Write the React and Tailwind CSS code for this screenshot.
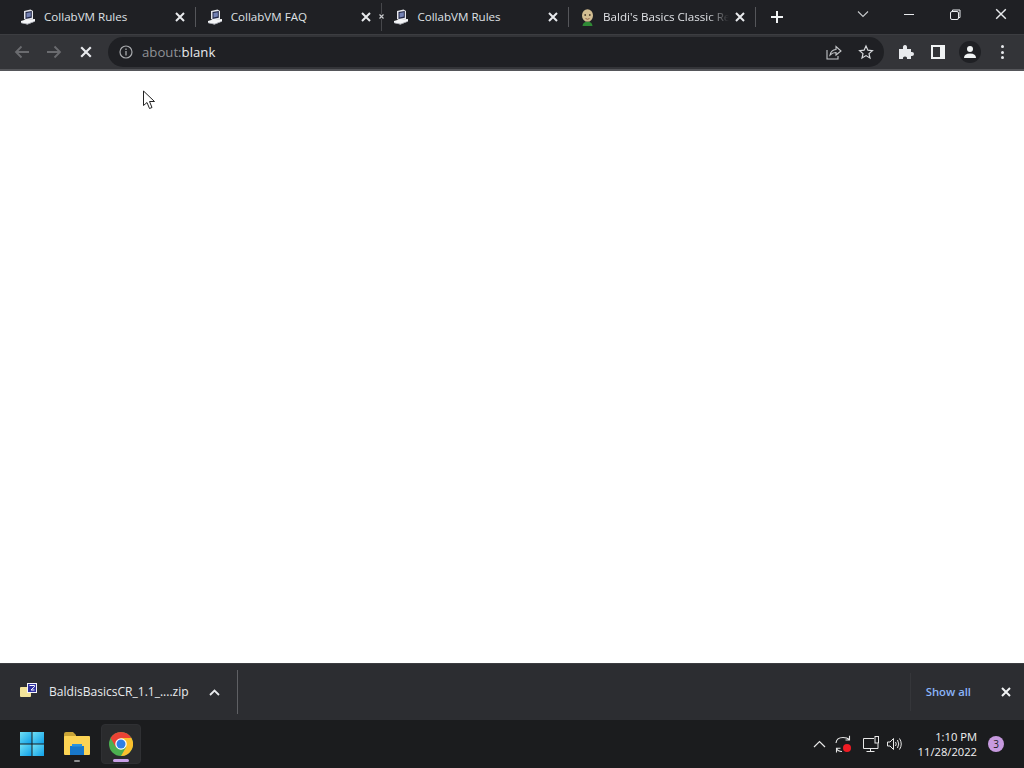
import React from "react";

const font = { fontFamily: "'Open Sans', 'Noto Sans', sans-serif" };

function VmIcon() {
  return (
    <svg width="16" height="16" viewBox="0 0 16 16" className="shrink-0">
      <path d="M4 2 L10.5 0.5 L13 2 L13 10 L6.5 11.5 L4 10 Z" fill="#e6e7ec" />
      <path d="M5.5 3 L11.8 2 L11.8 8.8 L5.5 10 Z" fill="#232846" />
      <path d="M6.5 4 L10.8 3.2 L10.8 7.6 L6.5 8.4 Z" fill="#7482b4" />
      <path d="M1 12 L6 10.5 L15 10 L15 12.5 L7.5 15.5 L1 14 Z" fill="#f4f5f7" />
      <path d="M1 13.4 L7.5 14.8 L15 12 L15 12.6 L7.5 15.5 L1 14 Z" fill="#8d909a" />
    </svg>
  );
}

function BaldiIcon() {
  return (
    <svg width="15" height="17" viewBox="0 0 15 17" className="shrink-0">
      <ellipse cx="7.5" cy="6.5" rx="5.5" ry="6.3" fill="#d2bd92" />
      <circle cx="5.2" cy="6" r="0.9" fill="#4a4030" />
      <circle cx="9.8" cy="6" r="0.9" fill="#4a4030" />
      <path d="M5.5 9.5 Q7.5 11 9.5 9.5" stroke="#8a5a44" strokeWidth="0.9" fill="none" />
      <path d="M2.5 17 Q3 12.8 7.5 12.8 Q12 12.8 12.5 17 Z" fill="#2f8a35" />
    </svg>
  );
}

function X({ size = 10, w = 2, color = "#e8eaed" }) {
  return (
    <svg width={size} height={size} viewBox="0 0 10 10" className="shrink-0">
      <path d="M1 1 L9 9 M9 1 L1 9" stroke={color} strokeWidth={w} fill="none" />
    </svg>
  );
}

function Tab({ icon, title, fade, tiny }) {
  return (
    <div className="relative flex h-[34px] w-[186.7px] shrink-0 items-center pl-[11px]">
      {icon}
      <span
        className={`ml-[8px] min-w-0 flex-1 overflow-hidden whitespace-nowrap text-[11.6px] text-[#dfe1e5] ${fade ? "[mask-image:linear-gradient(to_right,black_83%,transparent_100%)]" : ""}`}
      >
        {title}
      </span>
      <span className="ml-[6px] mr-[10px]">
        <X />
      </span>
      <div className={`w-px shrink-0 ${tiny ? "h-[28px] bg-[#46474b]" : "h-[20px] bg-[#55565a]"}`} />
      {tiny && (
        <span className="absolute right-[-2px] top-[14px] bg-[#1f2024]">
          <X size={5} w={2.4} color="#c8cacd" />
        </span>
      )}
    </div>
  );
}

function Windows() {
  return (
    <svg width="24" height="24" viewBox="0 0 24 24" className="shrink-0">
      <defs>
        <linearGradient id="win" x1="0" y1="0" x2="1" y2="1">
          <stop offset="0" stopColor="#6fe0f5" />
          <stop offset="1" stopColor="#0f9fe8" />
        </linearGradient>
      </defs>
      <rect x="0" y="0" width="11.5" height="11.5" fill="url(#win)" />
      <rect x="12.5" y="0" width="11.5" height="11.5" fill="url(#win)" />
      <rect x="0" y="12.5" width="11.5" height="11.5" fill="url(#win)" />
      <rect x="12.5" y="12.5" width="11.5" height="11.5" fill="url(#win)" />
    </svg>
  );
}

function Folder() {
  return (
    <svg width="26" height="24" viewBox="0 0 26 24" className="shrink-0">
      <path d="M0 2 Q0 0 2 0 L9 0 L12 3 L12 6 L0 6 Z" fill="#c9a437" />
      <rect x="0" y="4" width="26" height="19" rx="1" fill="#fcd354" />
      <rect x="6" y="14" width="14" height="9" fill="#1877c9" />
      <rect x="8" y="12" width="10" height="2.5" fill="#2a93de" />
    </svg>
  );
}

function Chrome() {
  return (
    <svg width="24" height="24" viewBox="0 0 48 48" className="shrink-0">
      <circle cx="24" cy="24" r="24" fill="#4caf50" />
      <path d="M24 0 A24 24 0 0 1 44.8 12 L24 12 L24 12 L13.6 30 L3.2 12 A24 24 0 0 1 24 0 Z" fill="#ea4335" />
      <path d="M44.8 12 A24 24 0 0 1 24 48 L34.4 30 L24 12 Z" fill="#fbc02d" />
      <circle cx="24" cy="24" r="11.5" fill="#fff" />
      <circle cx="24" cy="24" r="9" fill="#2f7fe6" />
    </svg>
  );
}

export default function App() {
  return (
    <div className="flex h-[768px] w-[1024px] flex-col overflow-hidden bg-white" style={font}>
      {/* tab strip */}
      <div className="flex h-[34px] shrink-0 items-center bg-[#1f2024] pl-[9px]">
        <Tab icon={<VmIcon />} title="CollabVM Rules" />
        <Tab icon={<VmIcon />} title="CollabVM FAQ" tiny />
        <Tab icon={<VmIcon />} title="CollabVM Rules" />
        <Tab icon={<BaldiIcon />} title="Baldi's Basics Classic Remastered" fade />
        <svg width="14" height="14" viewBox="0 0 14 14" className="ml-[14px] shrink-0">
          <path d="M7 1 V13 M1 7 H13" stroke="#f1f3f4" strokeWidth="2" />
        </svg>
        <svg width="12" height="8" viewBox="0 0 12 8" className="mb-[6px] ml-[73px] shrink-0">
          <path d="M1 1.5 L6 6.5 L11 1.5" stroke="#c8cacd" strokeWidth="1.1" fill="none" />
        </svg>
        <div className="mb-[6px] ml-[35px] h-px w-[10px] shrink-0 bg-[#e8eaed]" />
        <svg width="11" height="11" viewBox="0 0 11 11" className="mb-[6px] ml-[36px] shrink-0">
          <path d="M2.5 2.5 V1 H10 V8.5 H8.5" stroke="#e8eaed" fill="none" />
          <rect x="0.5" y="2.5" width="8" height="8" rx="1.5" stroke="#e8eaed" fill="none" />
        </svg>
        <span className="mb-[6px] ml-[34px]">
          <X size={12} w={1.2} />
        </span>
      </div>

      {/* toolbar */}
      <div className="flex h-[37px] shrink-0 items-center border-t border-[#3c3d41] border-b-2 border-b-[#55565a] bg-[#333438]">
        <svg width="16" height="14" viewBox="0 0 16 14" className="ml-[14px] shrink-0">
          <path d="M15 7 H2 M7.5 1.5 L2 7 L7.5 12.5" stroke="#6a6b6f" strokeWidth="1.8" fill="none" />
        </svg>
        <svg width="16" height="14" viewBox="0 0 16 14" className="ml-[16px] shrink-0">
          <path d="M1 7 H14 M8.5 1.5 L14 7 L8.5 12.5" stroke="#6a6b6f" strokeWidth="1.8" fill="none" />
        </svg>
        <span className="ml-[18px]">
          <X size={12} w={1.8} />
        </span>
        <div className="ml-[16px] flex h-[30px] w-[776px] shrink-0 items-center rounded-full bg-[#1f2024] pl-[11px] pr-[10px]">
          <svg width="14" height="14" viewBox="0 0 14 14" className="shrink-0">
            <circle cx="7" cy="7" r="6" stroke="#a8aaad" strokeWidth="1.2" fill="none" />
            <path d="M7 6 V10.5 M7 3.5 V5" stroke="#a8aaad" strokeWidth="1.3" />
          </svg>
          <span className="ml-[9px] pt-[1px] text-[13.2px] text-[#8f9195]">
            about:<span className="text-[#e8eaed]">blank</span>
          </span>
          <div className="flex-1" />
          <svg width="16" height="15" viewBox="0 0 16 15" className="shrink-0">
            <path d="M1 5 V14 H12 V11" stroke="#c4c6c9" strokeWidth="1.1" fill="none" />
            <path d="M4 10 Q5 5 10 4.5 V1.5 L15 6 L10 10 V7.5 Q6.5 7.5 4 10 Z" stroke="#c4c6c9" strokeWidth="1.1" fill="none" />
          </svg>
          <svg width="16" height="16" viewBox="0 0 16 16" className="ml-[16px] shrink-0">
            <path d="M8 2 L9.9 6.2 L14.4 6.6 L11 9.6 L12 14 L8 11.6 L4 14 L5 9.6 L1.6 6.6 L6.1 6.2 Z" stroke="#d8dadd" strokeWidth="1.2" fill="none" />
          </svg>
        </div>
        <svg width="16" height="16" viewBox="0 0 16 16" className="ml-[14px] shrink-0">
          <path d="M1 5 H5 Q4.5 1 7 1 Q9.5 1 9 5 H13 V8 Q16 7.5 16 10 Q16 12.5 13 12 V15 H9 Q9.5 12.5 7 12.5 Q4.5 12.5 5 15 H1 Z" fill="#e8eaed" />
        </svg>
        <svg width="14" height="14" viewBox="0 0 14 14" className="ml-[17px] shrink-0">
          <path d="M0 0 H14 V14 H0 Z M2 2 V12 H9 V2 Z" fill="#f1f3f4" fillRule="evenodd" />
        </svg>
        <div className="ml-[14px] flex h-[22px] w-[22px] shrink-0 items-center justify-center rounded-full bg-[#1f2024]">
          <svg width="14" height="14" viewBox="0 0 14 14">
            <circle cx="7" cy="4" r="3" fill="#f1f3f4" />
            <path d="M1 13 Q1 8.5 7 8.5 Q13 8.5 13 13 Z" fill="#f1f3f4" />
          </svg>
        </div>
        <div className="ml-[20px] flex shrink-0 flex-col gap-[2.5px]">
          <div className="h-[3px] w-[3px] rounded-full bg-[#e8eaed]" />
          <div className="h-[3px] w-[3px] rounded-full bg-[#e8eaed]" />
          <div className="h-[3px] w-[3px] rounded-full bg-[#e8eaed]" />
        </div>
      </div>

      {/* page */}
      <div className="relative flex-1 bg-white">
        <svg width="14" height="20" viewBox="0 0 14 20" className="absolute left-[142px] top-[19px]">
          <path d="M1.5 1 V15.5 L5 12.5 L7.5 18.5 L10 17.5 L7.5 11.5 L12.5 11.5 Z" fill="#fff" stroke="#222" strokeWidth="1" />
        </svg>
      </div>

      {/* download bar */}
      <div className="flex h-[57px] shrink-0 items-center border-t border-[#3c3d41] bg-[#2c2d31]">
        <svg width="17" height="16" viewBox="0 0 17 16" className="mb-[3px] ml-[20px] shrink-0">
          <rect x="0" y="4" width="11" height="10" rx="1" fill="#f3e39a" />
          <rect x="7" y="0" width="10" height="10" fill="#f5f5fa" />
          <rect x="8" y="1" width="8" height="8" fill="#2e2f9e" />
          <path d="M9.5 2.5 H14.5 V3.7 L11 7 H14.5" stroke="#fff" strokeWidth="1" fill="none" />
        </svg>
        <span className="ml-[12px] whitespace-nowrap text-[12.05px] text-[#e8eaed]">BaldisBasicsCR_1.1_....zip</span>
        <svg width="11" height="7" viewBox="0 0 11 7" className="ml-[20px] shrink-0">
          <path d="M1 6 L5.5 1.5 L10 6" stroke="#e8eaed" strokeWidth="1.8" fill="none" />
        </svg>
        <div className="ml-[17px] h-[44px] w-px shrink-0 bg-[#5f6064]" />
        <div className="flex-1" />
        <div className="h-[38px] w-px shrink-0 bg-[#35363a]" />
        <span className="ml-[15px] whitespace-nowrap text-[11.3px] font-semibold text-[#8ab4f8]">Show all</span>
        <span className="ml-[30px] mr-[13px]">
          <X size={10} w={2} color="#f1f3f4" />
        </span>
      </div>

      {/* taskbar */}
      <div className="flex h-[48px] shrink-0 items-center bg-[#1b1c1e] pl-[20px]">
        <Windows />
        <div className="relative ml-[20px]">
          <Folder />
          <div className="absolute bottom-[-6px] left-[10px] h-[2px] w-[6px] rounded-full bg-[#8d8e90]" />
        </div>
        <div className="relative ml-[11px] flex h-[40px] w-[40px] items-center justify-center rounded-[4px] border border-[#2f3033] bg-[#2a2b2d]">
          <Chrome />
          <div className="absolute bottom-[1px] left-[11px] h-[3px] w-[16px] rounded-full bg-[#c9a0e8]" />
        </div>
        <div className="flex-1" />
        <svg width="13" height="8" viewBox="0 0 13 8" className="shrink-0">
          <path d="M1 7 L6.5 1.5 L12 7" stroke="#e8e8e8" strokeWidth="1.2" fill="none" />
        </svg>
        <div className="relative ml-[9px] h-[18px] w-[16px] shrink-0">
          <svg width="16" height="18" viewBox="0 0 16 18">
            <path d="M1 8 Q1.5 2.5 8 2.5 Q12 2.5 14.5 4.5 M14.5 0.8 V5 H10.5 M1.5 13.5 Q3 16.5 7 16.5 M1.5 17.5 V13.2 H5.5" stroke="#e8e8e8" strokeWidth="1.1" fill="none" />
          </svg>
          <div className="absolute bottom-[1px] right-0 h-[8px] w-[8px] rounded-full bg-[#ef1c24]" />
        </div>
        <svg width="16" height="16" viewBox="0 0 16 16" className="ml-[12px] shrink-0">
          <path d="M11 2.5 H0.5 V12.5 H15 V7.5 M3.5 15.5 H11.5 M7.5 12.5 V15.5" stroke="#e8e8e8" fill="none" />
          <rect x="12" y="0.5" width="3.5" height="6.5" stroke="#e8e8e8" fill="none" />
        </svg>
        <svg width="16" height="14" viewBox="0 0 16 14" className="ml-[8px] shrink-0">
          <path d="M0.5 5 H3 L6.5 1.5 V12.5 L3 9 H0.5 Z" stroke="#e8e8e8" fill="none" />
          <path d="M8.5 5 Q10 7 8.5 9 M10.5 3 Q13 7 10.5 11 M12.5 1.5 Q16 7 12.5 12.5" stroke="#e8e8e8" fill="none" />
        </svg>
        <div className="ml-[8px] flex w-[66px] shrink-0 flex-col items-end text-[11.2px] leading-[15px] text-[#f2f2f2]">
          <span>1:10 PM</span>
          <span>11/28/2022</span>
        </div>
        <div className="ml-[11px] mr-[20px] flex h-[16px] w-[16px] shrink-0 items-center justify-center rounded-full bg-[#c79adf] text-[10px] text-[#1b1c1e]">
          3
        </div>
      </div>
    </div>
  );
}
